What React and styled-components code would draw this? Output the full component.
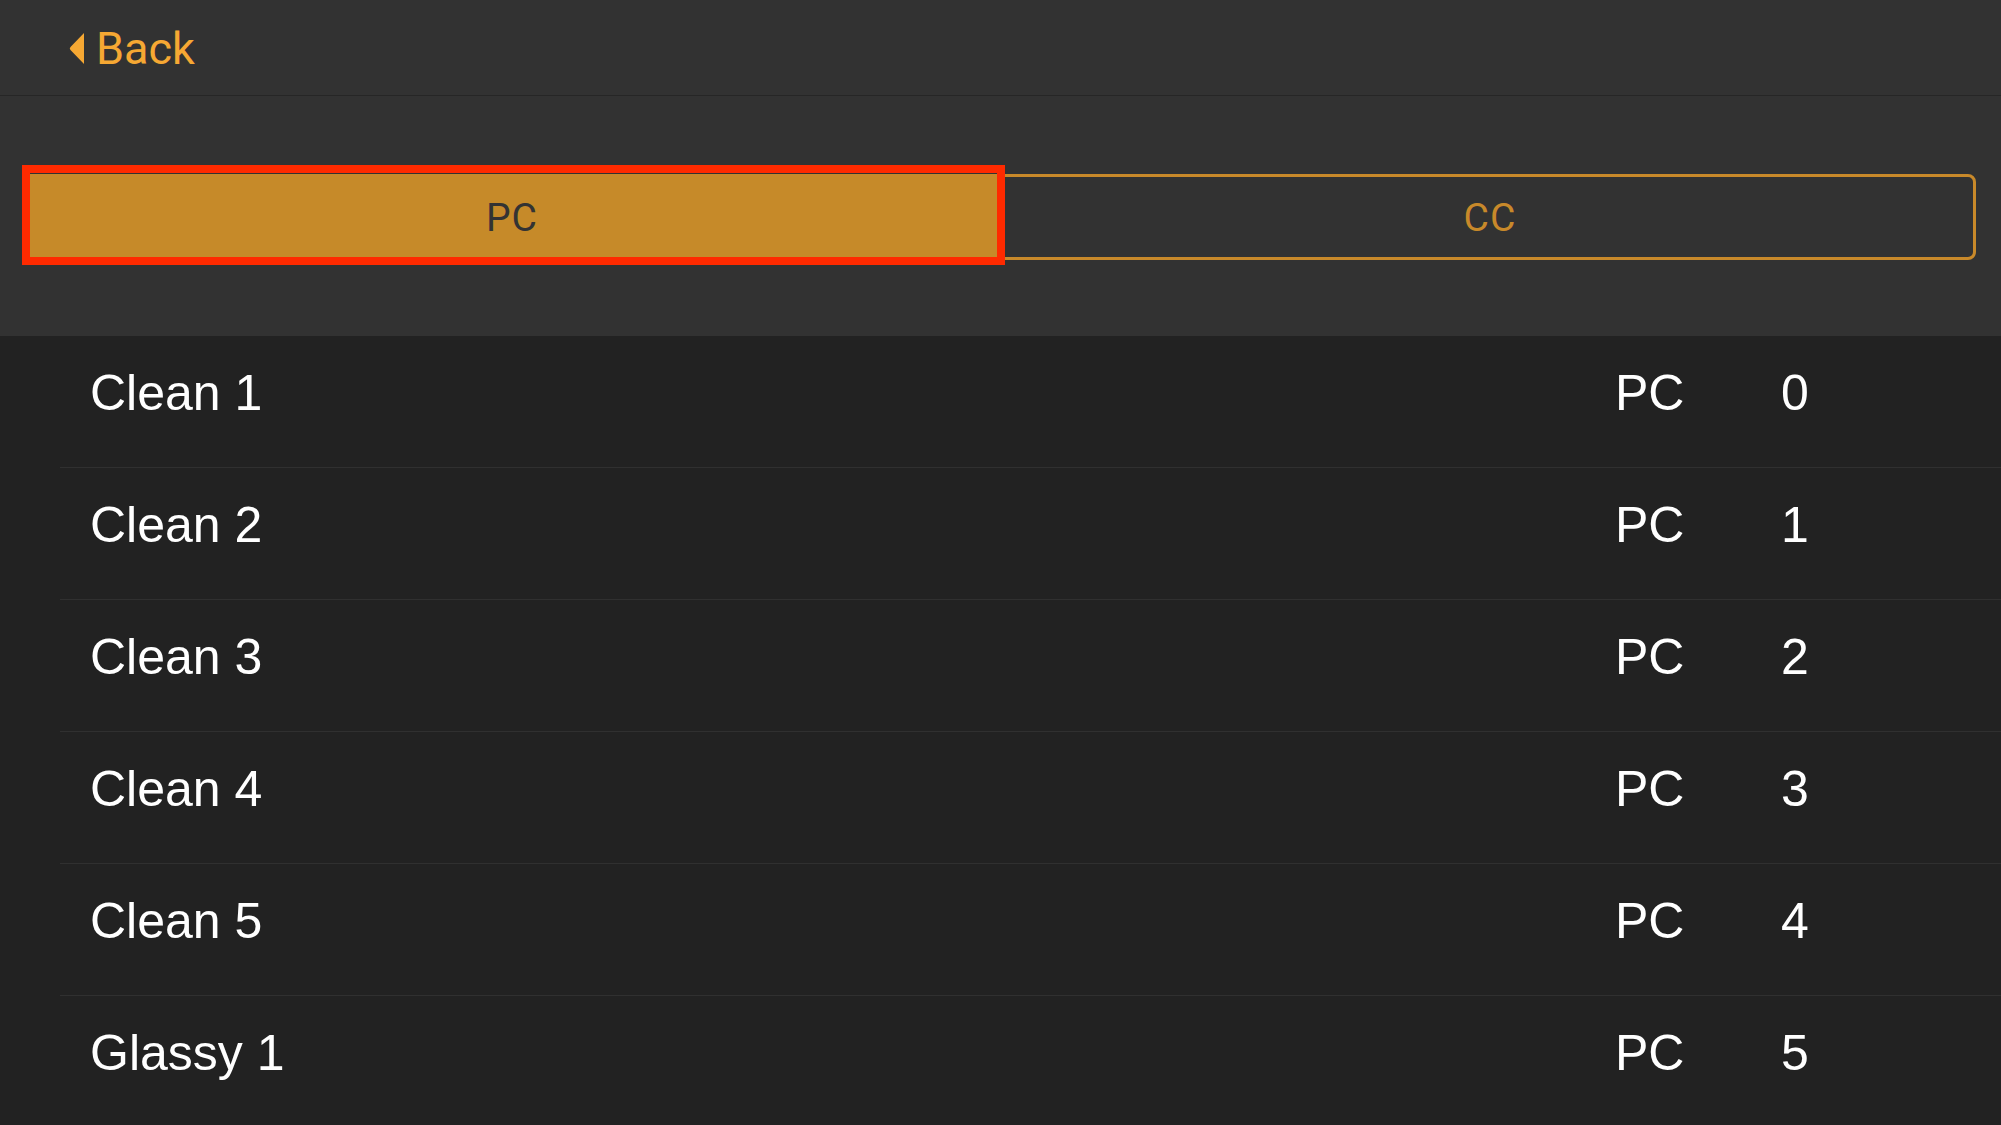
import React from 'react'
import styled, { createGlobalStyle } from 'styled-components'

const GlobalStyle = createGlobalStyle`
  html, body {
    margin: 0;
    padding: 0;
    background: #222222;
    overflow: hidden;
  }
  * {
    box-sizing: border-box;
  }
`;

const Screen = styled.div`
  width: 2001px;
  height: 1125px;
  display: flex;
  flex-direction: column;
  background: #222222;
  overflow: hidden;
`;

const NavBar = styled.header`
  height: 96px;
  flex-shrink: 0;
  display: flex;
  align-items: center;
  padding: 2px 0 0 69px;
  background: #323232;
  border-bottom: 1px solid #262626;
`;

const BackButton = styled.button`
  display: flex;
  align-items: center;
  gap: 11px;
  padding: 0;
  border: 0;
  background: none;
  color: #f6a833;
  font-family: Roboto, "Noto Sans", sans-serif;
  font-size: 45px;
  line-height: 1;
  cursor: pointer;

  svg {
    width: 16px;
    height: 31px;
    margin-top: -1px;
  }
`;

const SegmentArea = styled.div`
  height: 240px;
  flex-shrink: 0;
  padding: 78px 25px 0 22px;
  background: #323232;
`;

const Segments = styled.div`
  display: grid;
  grid-template-columns: 1fr 1fr;
  height: 86px;
  border: 3px solid #c8892a;
  border-radius: 8px;
`;

const Segment = styled.div`
  position: relative;
  display: flex;
  align-items: center;
  justify-content: center;
  padding: 2px 0 0 ${p => (p.$active ? '0' : '8px')};
  font-family: Roboto, "Noto Sans", sans-serif;
  font-size: 39px;
  letter-spacing: 1px;
  color: ${p => (p.$active ? '#333333' : '#c8892a')};
  background: ${p => (p.$active ? '#c68a29' : 'transparent')};
`;

const Highlight = styled.span`
  position: absolute;
  top: -12px;
  left: -3px;
  right: -6px;
  bottom: -8px;
  border: 8px solid #ff2a00;
  pointer-events: none;
`;

const List = styled.ul`
  margin: 0;
  padding: 0;
  list-style: none;
  background: #222222;
`;

const Row = styled.li`
  display: grid;
  grid-template-columns: 1fr 166px 220px;
  align-items: center;
  height: 132px;
  margin-left: 60px;
  padding: 0 0 17px 30px;
  border-bottom: 1px solid #303030;
  font-family: "Liberation Sans", Arial, sans-serif;
  font-size: 50px;
  line-height: 1;
  color: #ffffff;
`;

const Cell = styled.span`
  white-space: nowrap;
`;

const presets = [
  { name: 'Clean 1', type: 'PC', value: 0 },
  { name: 'Clean 2', type: 'PC', value: 1 },
  { name: 'Clean 3', type: 'PC', value: 2 },
  { name: 'Clean 4', type: 'PC', value: 3 },
  { name: 'Clean 5', type: 'PC', value: 4 },
  { name: 'Glassy 1', type: 'PC', value: 5 },
];

function BackArrow() {
  return (
    <svg viewBox="0 0 16 31">
      <path d="M15 0 L15 31 L1.5 17 Q0 15.5 1.5 14 Z" fill="currentColor" />
    </svg>
  )
}

export default function App() {
  return (
    <Screen>
      <GlobalStyle />
      <NavBar>
        <BackButton>
          <BackArrow />
          Back
        </BackButton>
      </NavBar>
      <SegmentArea>
        <Segments>
          <Segment $active>
            PC
            <Highlight />
          </Segment>
          <Segment>CC</Segment>
        </Segments>
      </SegmentArea>
      <List>
        {presets.map(p => (
          <Row key={p.name}>
            <Cell>{p.name}</Cell>
            <Cell>{p.type}</Cell>
            <Cell>{p.value}</Cell>
          </Row>
        ))}
      </List>
    </Screen>
  )
}
